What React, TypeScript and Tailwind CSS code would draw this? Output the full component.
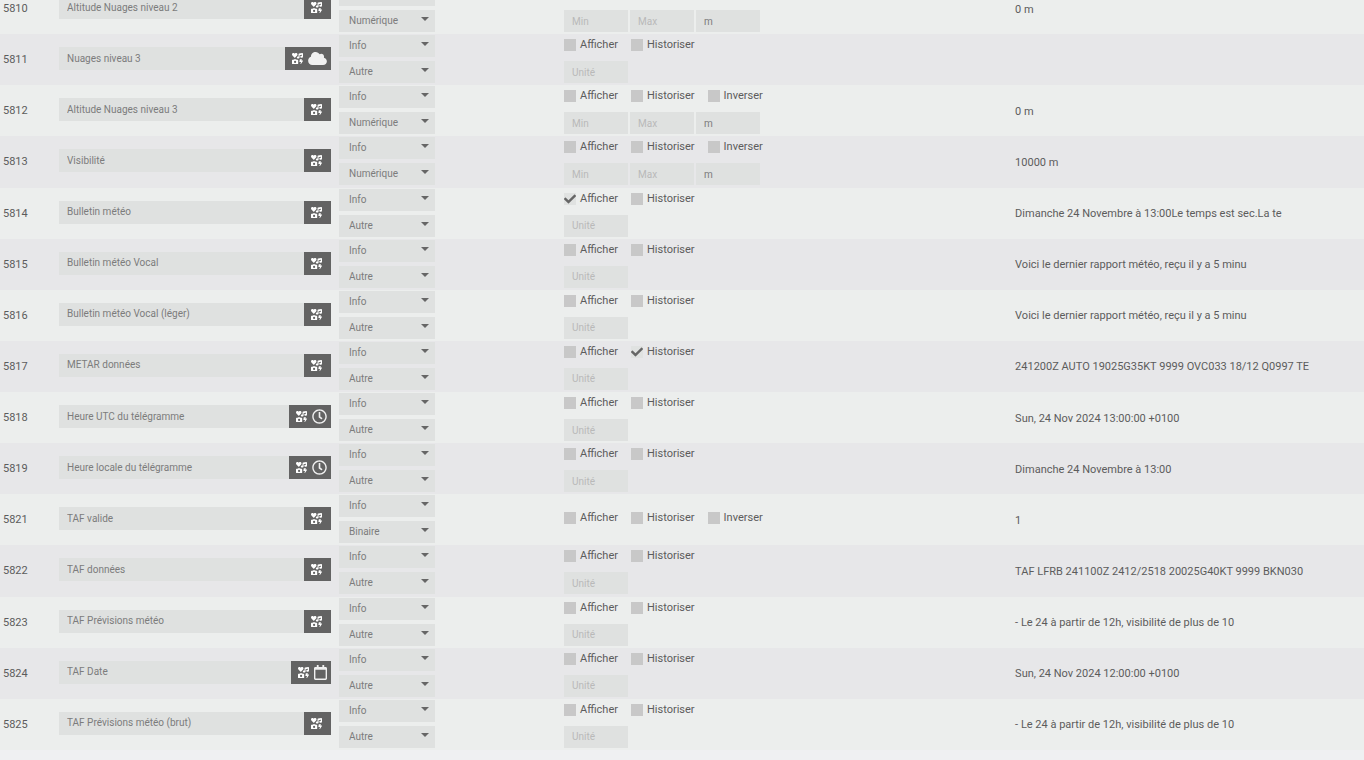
// Importing part
import type { ReactNode } from "react";
import {
   FaCheck,
   FaCloud,
   FaIcons,
   FaRegCalendar,
   FaRegClock,
} from "react-icons/fa";

// Defining types
type Icon = "cloud" | "clock" | "calendar";
type SubType = "Autre" | "Numérique" | "Binaire";

interface Command {
   id: number;
   name: string;
   subType: SubType;
   value?: string;
   icon?: Icon;
   visible?: boolean;
   historized?: boolean;
}

// Commands of the weather equipment
const commands: Command[] = [
   { id: 5810, name: "Altitude Nuages niveau 2", subType: "Numérique", value: "0 m" },
   { id: 5811, name: "Nuages niveau 3", subType: "Autre", icon: "cloud" },
   { id: 5812, name: "Altitude Nuages niveau 3", subType: "Numérique", value: "0 m" },
   { id: 5813, name: "Visibilité", subType: "Numérique", value: "10000 m" },
   {
      id: 5814,
      name: "Bulletin météo",
      subType: "Autre",
      value: "Dimanche 24 Novembre à 13:00Le temps est sec.La te",
      visible: true,
   },
   {
      id: 5815,
      name: "Bulletin météo Vocal",
      subType: "Autre",
      value: "Voici le dernier rapport météo, reçu il y a 5 minu",
   },
   {
      id: 5816,
      name: "Bulletin météo Vocal (léger)",
      subType: "Autre",
      value: "Voici le dernier rapport météo, reçu il y a 5 minu",
   },
   {
      id: 5817,
      name: "METAR données",
      subType: "Autre",
      value: "241200Z AUTO 19025G35KT 9999 OVC033 18/12 Q0997 TE",
      historized: true,
   },
   {
      id: 5818,
      name: "Heure UTC du télégramme",
      subType: "Autre",
      value: "Sun, 24 Nov 2024 13:00:00 +0100",
      icon: "clock",
   },
   {
      id: 5819,
      name: "Heure locale du télégramme",
      subType: "Autre",
      value: "Dimanche 24 Novembre à 13:00",
      icon: "clock",
   },
   { id: 5821, name: "TAF valide", subType: "Binaire", value: "1" },
   {
      id: 5822,
      name: "TAF données",
      subType: "Autre",
      value: "TAF LFRB 241100Z 2412/2518 20025G40KT 9999 BKN030",
   },
   {
      id: 5823,
      name: "TAF Prévisions météo",
      subType: "Autre",
      value: "- Le 24 à partir de 12h, visibilité de plus de 10",
   },
   {
      id: 5824,
      name: "TAF Date",
      subType: "Autre",
      value: "Sun, 24 Nov 2024 12:00:00 +0100",
      icon: "calendar",
   },
   {
      id: 5825,
      name: "TAF Prévisions météo (brut)",
      subType: "Autre",
      value: "- Le 24 à partir de 12h, visibilité de plus de 10",
   },
];

const icons: Record<Icon, ReactNode> = {
   cloud: <FaCloud className="h-[15px] w-[19px]" />,
   clock: <FaRegClock className="size-[15px]" />,
   calendar: <FaRegCalendar className="h-[15px] w-[13px]" />,
};

// Creating Select component
function Select({
   label,
   value,
   options,
}: {
   label: string;
   value: string;
   options: string[];
}) {
   return (
      <div className="relative h-[22px] w-24">
         <select
            aria-label={label}
            defaultValue={value}
            className="block h-full w-full appearance-none bg-[#dfe1e0] pr-5 pl-[10px] text-[10px] text-[#7c7c7c] outline-none"
         >
            {options.map((option) => (
               <option key={option}>{option}</option>
            ))}
         </select>
         <svg
            viewBox="0 0 8 4"
            className="pointer-events-none absolute top-[7px] right-[6px] h-1 w-2 fill-[#666666]"
         >
            <path d="M0 0h8L4 4z" />
         </svg>
      </div>
   );
}

// Creating Checkbox component
function Checkbox({ label, checked }: { label: string; checked?: boolean }) {
   return (
      <label className="flex items-center gap-1 text-[11px] leading-4">
         <span className="relative size-3">
            <input
               type="checkbox"
               defaultChecked={checked}
               className="peer block size-3 appearance-none bg-[#c8c8c8] checked:bg-[#e0e2e1]"
            />
            <FaCheck className="pointer-events-none absolute inset-0 hidden size-3 text-[#666666] peer-checked:block" />
         </span>
         {label}
      </label>
   );
}

// Creating SmallInput component
function SmallInput({ label, value }: { label: string; value?: string }) {
   return (
      <input
         type="text"
         aria-label={label}
         placeholder={label}
         defaultValue={value}
         className="h-[22px] w-16 bg-[#dfe1e0] px-2 text-[10px] text-[#7c7c7c] outline-none placeholder:text-[#b9b9b9]"
      />
   );
}

// Creating CommandRow component
function CommandRow({ command }: { command: Command }) {
   const { id, name, subType, value, icon, visible, historized } = command;

   return (
      <tr className="odd:bg-[#eceeed] even:bg-[#e7e7e9]">
         <td className="px-[3px] pt-px">{id}</td>
         <td className="pr-[5px] pb-0.5 pl-[3px]">
            <div className="flex h-[23px]">
               <input
                  type="text"
                  aria-label={`Nom ${id}`}
                  defaultValue={name}
                  className="min-w-0 flex-1 bg-[#dfe1e0] px-2 text-[10px] text-[#7c7c7c] outline-none"
               />
               <button
                  type="button"
                  aria-label="Choisir une icône"
                  className="flex items-center gap-[5px] bg-[#636363] pr-1 pl-[7px] text-[#f0f0f0]"
               >
                  <FaIcons className="size-[11px] text-white" />
                  <span>{icon && icons[icon]}</span>
               </button>
            </div>
         </td>
         <td className="px-[3px] pt-px pb-0.5">
            <div className="flex flex-col gap-1">
               <Select label="Type" value="Info" options={["Info", "Action"]} />
               <Select
                  label="Sous-type"
                  value={subType}
                  options={["Numérique", "Binaire", "Autre"]}
               />
            </div>
         </td>
         <td className="px-[3px] pt-px pb-0.5">
            <div className="flex flex-col gap-1">
               <div className="flex h-[22px] items-center gap-[13px] pb-0.5">
                  <Checkbox label="Afficher" checked={visible} />
                  <Checkbox label="Historiser" checked={historized} />
                  {subType !== "Autre" && <Checkbox label="Inverser" />}
               </div>
               {subType === "Numérique" && (
                  <div className="flex gap-0.5">
                     <SmallInput label="Min" />
                     <SmallInput label="Max" />
                     <SmallInput label="Unité" value="m" />
                  </div>
               )}
               {subType === "Autre" && <SmallInput label="Unité" />}
            </div>
         </td>
         <td className="px-1 pt-0.5 whitespace-nowrap">{value}</td>
      </tr>
   );
}

// Creating and exporting App component as default
export default function App() {
   return (
      <main className="h-screen overflow-hidden bg-[#eff0f2] font-[Roboto,sans-serif] text-[11px] leading-4 text-[#5c5c5c]">
         <table className="-mt-[17px] h-[calc(100vh+7px)] w-full table-fixed">
            <colgroup>
               <col className="w-14" />
               <col className="w-[280px]" />
               <col className="w-[225px]" />
               <col className="w-[33%]" />
               <col />
            </colgroup>
            <tbody>
               {commands.map((command) => (
                  <CommandRow key={command.id} command={command} />
               ))}
            </tbody>
         </table>
      </main>
   );
}
